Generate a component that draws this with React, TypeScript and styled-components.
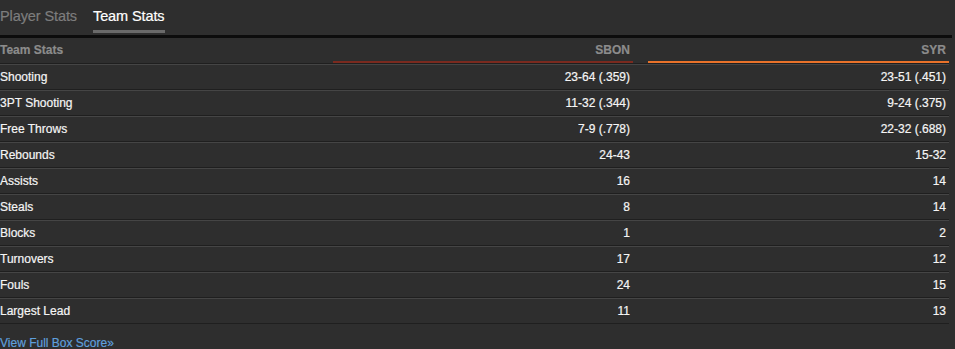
import React from "react";
import styled, { createGlobalStyle } from "styled-components";

const GlobalStyle = createGlobalStyle`
    html, body {
        margin: 0;
        padding: 0;
        background: #2e2e2e;
    }
    body {
        font-family: "Liberation Sans", Arial, Helvetica, sans-serif;
        -webkit-text-stroke: 0.2px currentColor;
    }
`;

const Page = styled.div`
    width: 955px;
    height: 349px;
    overflow: hidden;
    background: #2e2e2e;
`;

const Tabs = styled.div`
    display: flex;
    gap: 16px;
    height: 35px;
    border-bottom: 3px solid #0c0c0c;
    width: 952px;
`;

const Tab = styled.div<{ $active?: boolean }>`
    height: 30px;
    line-height: 32px;
    font-size: 14.5px;
    color: ${(p) => (p.$active ? "#ffffff" : "#7d7d7d")};
    border-bottom: 3px solid ${(p) => (p.$active ? "#6a6a6a" : "transparent")};
    letter-spacing: -0.1px;
`;

const Table = styled.div`
    width: 949px;
`;

const Row = styled.div`
    display: grid;
    grid-template-columns: 318px 315px 316px;
    height: 24px;
    border-top: 1px solid #454545;
    border-bottom: 1px solid #1f1f1f;
    &:first-child {
        border-top: none;
        height: 25px;
    }
`;

const Label = styled.div<{ $head?: boolean }>`
    line-height: 24px;
    font-size: 12px;
    font-weight: ${(p) => (p.$head ? "bold" : "normal")};
    color: ${(p) => (p.$head ? "#8c8c8c" : "#f5f5f5")};
    white-space: nowrap;
`;

const Value = styled.div`
    line-height: 24px;
    font-size: 12px;
    color: #f5f5f5;
    text-align: right;
    padding-right: 3px;
    white-space: nowrap;
`;

const TeamHead = styled.div<{ $color: string }>`
    margin-left: 15px;
    height: 23px;
    line-height: 24px;
    font-size: 12px;
    font-weight: bold;
    color: #8c8c8c;
    text-align: right;
    padding-right: 3px;
    border-bottom: 2px solid ${(p) => p.$color};
`;

const BoxLink = styled.a`
    display: block;
    margin-top: 12px;
    font-size: 12px;
    color: #5f9fdc;
    text-decoration: none;
    line-height: 14px;
`;

const stats: [string, string, string][] = [
    ["Shooting", "23-64 (.359)", "23-51 (.451)"],
    ["3PT Shooting", "11-32 (.344)", "9-24 (.375)"],
    ["Free Throws", "7-9 (.778)", "22-32 (.688)"],
    ["Rebounds", "24-43", "15-32"],
    ["Assists", "16", "14"],
    ["Steals", "8", "14"],
    ["Blocks", "1", "2"],
    ["Turnovers", "17", "12"],
    ["Fouls", "24", "15"],
    ["Largest Lead", "11", "13"],
];

const App: React.FC = () => {
    return (
        <Page>
            <GlobalStyle />
            <Tabs>
                <Tab>Player Stats</Tab>
                <Tab $active>Team Stats</Tab>
            </Tabs>
            <Table>
                <Row>
                    <Label $head>Team Stats</Label>
                    <TeamHead $color="#7b2a1f">SBON</TeamHead>
                    <TeamHead $color="#e9722a">SYR</TeamHead>
                </Row>
                {stats.map(([name, home, away]) => (
                    <Row key={name}>
                        <Label>{name}</Label>
                        <Value>{home}</Value>
                        <Value>{away}</Value>
                    </Row>
                ))}
            </Table>
            <BoxLink href="#">View Full Box Score»</BoxLink>
        </Page>
    );
};

export default App;
